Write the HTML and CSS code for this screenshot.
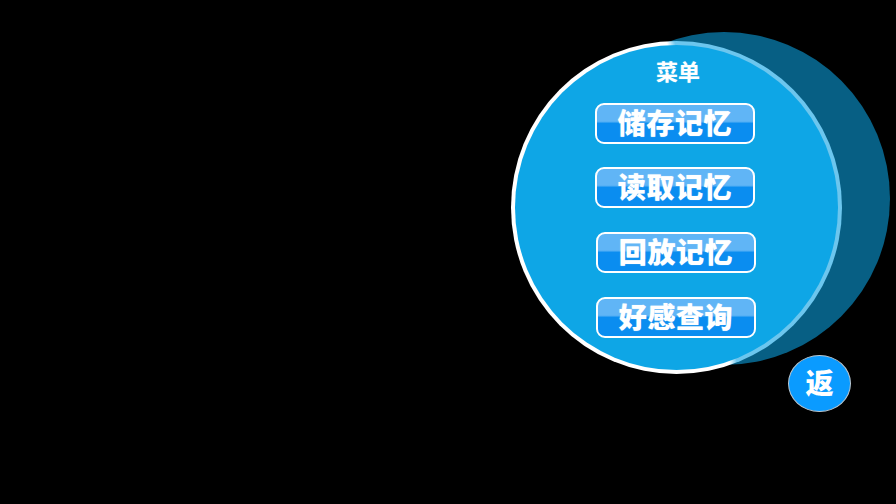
FILE: index.html
```html
<!DOCTYPE html>
<html lang="zh-CN">
<head>
<meta charset="utf-8">
<title>菜单</title>
<link rel="stylesheet" href="styles.css">
</head>
<body>
<main class="stage">
  <div class="shadow-disc"></div>
  <section class="menu-disc">
    <h1 class="menu-title">菜单</h1>
    <div class="menu-list">
      <button class="menu-btn">储存记忆</button>
      <button class="menu-btn">读取记忆</button>
      <button class="menu-btn menu-btn-shift">回放记忆</button>
      <button class="menu-btn menu-btn-shift">好感查询</button>
    </div>
  </section>
  <button class="back-btn">返</button>
</main>
</body>
</html>
```

FILE: styles.css
```css
* { box-sizing: border-box; }
html, body { margin: 0; height: 100%; background: #000; overflow: hidden; }
.stage { position: relative; width: 896px; height: 504px; background: #000; font-family: "Noto Sans CJK SC", "Noto Sans", sans-serif; }
.shadow-disc { position: absolute; left: 558px; top: 32px; width: 332px; height: 333px; border-radius: 50%; background: #075f84; }
.menu-disc {
  position: absolute; left: 511px; top: 41px; width: 331px; height: 333px;
  border: 4px solid transparent; border-radius: 50%;
  background:
    linear-gradient(#0ea6e6, #0ea6e6) padding-box,
    linear-gradient(79deg, #fff calc(50% + 22px), #6cc6ee calc(50% + 30px)) border-box;
  display: flex; flex-direction: column; padding-left: 80px;
}
.menu-title { margin: 10px 0 0 61px; width: 48px; font-size: 22px; line-height: 31px; font-weight: 700; color: #fff; white-space: nowrap; text-shadow: 0 0 1px rgba(255,255,255,.5); }
.menu-list { display: flex; flex-direction: column; align-items: flex-start; margin-top: 17px; }
.menu-btn {
  width: 160px; height: 41px; padding: 0 0 4px; margin-bottom: 24px;
  border: 2px solid #fff; border-radius: 9px;
  background: linear-gradient(#60b5f6 0, #60b5f6 44%, #0a8df0 50%, #0a8df0 100%);
  color: #fff; font-family: inherit; font-size: 28px; letter-spacing: .6px; line-height: 34px; font-weight: 900; white-space: nowrap; text-shadow: 0 0 1px rgba(255,255,255,.6);
}
.menu-btn:first-child { margin-bottom: 23px; }
.menu-btn-shift { margin-left: 1px; }
.back-btn {
  position: absolute; left: 788px; top: 355px; width: 63px; height: 57px; padding: 0 0 4px;
  border: 1px solid #b9c6d0; border-radius: 50%; background: #0a9bff;
  color: #fff; font-family: inherit; font-size: 28px; font-weight: 900; line-height: 1;
}
```
